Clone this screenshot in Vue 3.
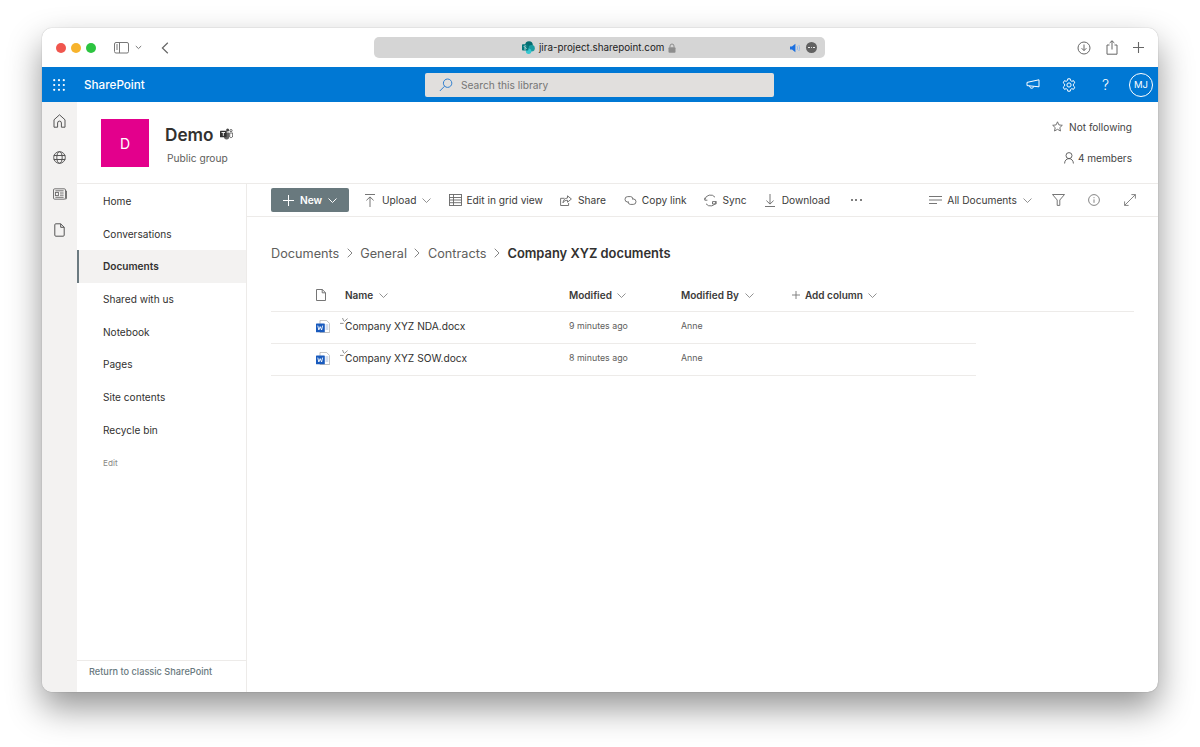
<script setup>
const navItems = [
  { label: 'Home' },
  { label: 'Conversations' },
  { label: 'Documents', active: true },
  { label: 'Shared with us' },
  { label: 'Notebook' },
  { label: 'Pages' },
  { label: 'Site contents' },
  { label: 'Recycle bin' },
]
const files = [
  { name: 'Company XYZ NDA.docx', modified: '9 minutes ago', by: 'Anne' },
  { name: 'Company XYZ SOW.docx', modified: '8 minutes ago', by: 'Anne' },
]
</script>

<template>
  <div class="page">
    <div class="window">
      <header class="titlebar">
        <div class="traffic">
          <span class="dot red"></span>
          <span class="dot yellow"></span>
          <span class="dot green"></span>
        </div>
        <svg class="tb-sidebar" width="16" height="12" viewBox="0 0 16 12" fill="none" stroke="#777" stroke-width="1">
          <rect x="0.5" y="0.5" width="14" height="10.5" rx="1.5" />
          <path d="M5.5 .5v10.5" />
          <path d="M2 3h2M2 5h2M2 7h2" />
        </svg>
        <svg class="tb-caret" width="7" height="5" viewBox="0 0 7 5" fill="none" stroke="#777" stroke-width="1"><path d="M.8 1l2.7 2.6L6.2 1" /></svg>
        <svg class="tb-back" width="8" height="12" viewBox="0 0 8 12" fill="none" stroke="#666" stroke-width="1.2"><path d="M6.8.8L1.4 6l5.4 5.2" /></svg>
        <div class="address">
          <svg class="sp-logo" width="13" height="13" viewBox="0 0 13 13">
            <circle cx="7" cy="4" r="3.8" fill="#036c70" />
            <circle cx="9.6" cy="7.2" r="3.2" fill="#1a9ba1" />
            <circle cx="6.6" cy="10.2" r="2.7" fill="#37c6d0" />
            <rect x="0" y="3.2" width="6.4" height="6.4" rx=".8" fill="#03787c" />
            <path d="M2 7.8c.8.4 2.3.4 2.3-.5 0-1-2.2-.6-2.2-1.7 0-.8 1.3-.9 2.1-.5" fill="none" stroke="#fff" stroke-width=".7" />
          </svg>
          <span class="host">jira-project.sharepoint.com</span>
          <svg class="lock" width="8" height="10" viewBox="0 0 8 10"><path d="M2 4.5V3a2 2 0 014 0v1.5" fill="none" stroke="#8d8d8d" stroke-width="1" /><rect x=".5" y="4.2" width="7" height="5.6" rx="1" fill="#8d8d8d" /></svg>
          <svg class="speaker" width="11" height="10" viewBox="0 0 11 10">
            <path d="M0 3.4h2L5.4.8v8.4L2 6.6H0z" fill="#1a6fe0" />
            <path d="M7 3c.7 1.2.7 2.8 0 4M8.8 2c1 1.8 1 4.2 0 6" fill="none" stroke="#8fb6ea" stroke-width=".9" />
          </svg>
          <span class="more-dot"><i></i><i></i><i></i></span>
        </div>
        <div class="tb-right">
          <svg width="14" height="14" viewBox="0 0 14 14" fill="none" stroke="#666" stroke-width="1"><circle cx="7" cy="7" r="6" /><path d="M7 3.5v6M4.6 7.2L7 9.6l2.4-2.4" /></svg>
          <svg width="12" height="15" viewBox="0 0 12 15" fill="none" stroke="#666" stroke-width="1"><path d="M3.5 5H1v9.2h10V5H8.5M6 9.5V.8M3.6 3L6 .8 8.4 3" /></svg>
          <svg width="11" height="11" viewBox="0 0 11 11" fill="none" stroke="#666" stroke-width="1.1"><path d="M5.5 0v11M0 5.5h11" /></svg>
        </div>
      </header>

      <div class="suitebar">
        <svg class="waffle" width="12" height="12" viewBox="0 0 12 12" fill="#fff">
          <circle cx="1.2" cy="1.2" r="1.1" /><circle cx="6" cy="1.2" r="1.1" /><circle cx="10.8" cy="1.2" r="1.1" />
          <circle cx="1.2" cy="6" r="1.1" /><circle cx="6" cy="6" r="1.1" /><circle cx="10.8" cy="6" r="1.1" />
          <circle cx="1.2" cy="10.8" r="1.1" /><circle cx="6" cy="10.8" r="1.1" /><circle cx="10.8" cy="10.8" r="1.1" />
        </svg>
        <span class="brand">SharePoint</span>
        <div class="search">
          <svg width="14" height="14" viewBox="0 0 14 14" fill="none" stroke="#2f7fd0" stroke-width="1"><circle cx="8.6" cy="5.2" r="4.2" /><path d="M5.6 8.2L.8 13" /></svg>
          <span>Search this library</span>
        </div>
        <div class="suite-right">
          <svg class="ic-mega" width="14" height="11" viewBox="0 0 14 11" fill="none" stroke="#fff" stroke-width="1"><path d="M13 .8v7L1 6.6V3.4zM3.6 6.9c0 3 3.9 3 3.9.7" /></svg>
          <svg class="ic-gear" width="14" height="14" viewBox="0 0 14 14" fill="none" stroke="#fff" stroke-width="1"><circle cx="7" cy="7" r="2.1" /><path d="M5.8.8h2.4l.4 1.8 1.2.7 1.8-.6 1.2 2.1-1.4 1.3v1.8l1.4 1.3-1.2 2.1-1.8-.6-1.2.7-.4 1.8H5.8l-.4-1.8-1.2-.7-1.8.6-1.2-2.1 1.4-1.3V6.1L1.2 4.8l1.2-2.1 1.8.6 1.2-.7z" /></svg>
          <span class="help">?</span>
          <span class="avatar">MJ</span>
        </div>
      </div>

      <div class="body">
        <aside class="rail">
          <svg width="13" height="14" viewBox="0 0 13 14" fill="none" stroke="#555" stroke-width="1"><path d="M1 5.8L6.5 .8 12 5.8v7.4H8.4V9a1.9 1.9 0 00-3.8 0v4.2H1z" /></svg>
          <svg width="13" height="13" viewBox="0 0 13 13" fill="none" stroke="#555" stroke-width="1"><circle cx="6.5" cy="6.5" r="5.8" /><ellipse cx="6.5" cy="6.5" rx="2.7" ry="5.8" /><path d="M.8 4.5h11.4M.8 8.5h11.4" /></svg>
          <svg width="14" height="12" viewBox="0 0 14 12" fill="none" stroke="#666" stroke-width=".9"><rect x=".5" y=".8" width="12" height="10.4" rx="1.2" /><path d="M12.5 3h1v7.2a1 1 0 01-1 1" /><rect x="2.4" y="4.4" width="3" height="3.2" /><path d="M2.4 2.8h8.2M7 5h3.6M7 7.2h3.6M2.4 9.3h8.2" /></svg>
          <svg width="11" height="14" viewBox="0 0 11 14" fill="none" stroke="#555" stroke-width="1"><path d="M.8 1.8a1 1 0 011-1h4.900l3.500 3.500v7.900a1 1 0 01-1 1H1.800a1 1 0 01-1-1zM6.700.8v3.500h3.500" /></svg>
        </aside>

        <div class="main">
          <section class="site-head">
            <div class="site-logo">D</div>
            <div class="site-info">
              <div class="site-title">
                <h1>Demo</h1>
                <svg width="13" height="12" viewBox="0 0 13 12">
                  <circle cx="7.6" cy="2" r="1.5" fill="#444" />
                  <circle cx="11" cy="2.6" r="1.1" fill="none" stroke="#444" stroke-width=".8" />
                  <path d="M9.7 5h3v3a1.7 1.7 0 01-3 1z" fill="none" stroke="#444" stroke-width=".8" />
                  <path d="M4 4.5h5.2v4.3a2.6 2.6 0 01-5.2 0z" fill="#666" />
                  <rect x="0" y="2.7" width="6.6" height="6.6" rx=".6" fill="#333" />
                  <path d="M1.5 4.5h3.600M3.300 4.500v3.400" stroke="#fff" stroke-width=".9" />
                </svg>
              </div>
              <div class="site-sub">Public group</div>
            </div>
            <div class="site-meta">
              <div class="meta-row follow">
                <svg width="11" height="11" viewBox="0 0 11 11" fill="none" stroke="#666" stroke-width=".9"><path d="M5.5 .8l1.400 3.100 3.400.4-2.500 2.300.7 3.400-3-1.700-3 1.700.7-3.400L.7 4.300l3.400-.4z" /></svg>
                <span>Not following</span>
              </div>
              <div class="meta-row">
                <svg width="10" height="12" viewBox="0 0 10 12" fill="none" stroke="#555" stroke-width=".9"><circle cx="5" cy="3.6" r="3" /><path d="M.6 11.5c0-2.600 1.700-4.900 4.400-4.900s4.400 2.300 4.400 4.900" /></svg>
                <span>4 members</span>
              </div>
            </div>
          </section>

          <div class="content-row">
            <nav class="leftnav">
              <ul>
                <li v-for="item in navItems" :key="item.label" :class="{ active: item.active }">{{ item.label }}</li>
              </ul>
              <div class="nav-edit">Edit</div>
              <div class="nav-foot">Return to classic SharePoint</div>
            </nav>

            <div class="library">
              <div class="cmdbar">
                <button class="btn-new">
                  <svg width="11" height="11" viewBox="0 0 11 11" stroke="#fff" stroke-width="1"><path d="M5.5 0v11M0 5.5h11" /></svg>
                  <span>New</span>
                  <svg width="9" height="5" viewBox="0 0 9 5" fill="none" stroke="#fff" stroke-width="1"><path d="M.5.5l4 4 4-4" /></svg>
                </button>
                <div class="cmd cmd-upload">
                  <svg width="10" height="13" viewBox="0 0 10 13" fill="none" stroke="#666" stroke-width=".9"><path d="M0 .5h10M5 13V3M1.4 6.4L5 2.900l3.600 3.500" /></svg>
                  <span>Upload</span>
                  <svg class="chev" width="9" height="5" viewBox="0 0 9 5" fill="none" stroke="#777" stroke-width=".8"><path d="M.5.5l4 4 4-4" /></svg>
                </div>
                <div class="cmd cmd-grid">
                  <svg width="13" height="12" viewBox="0 0 13 12" fill="none" stroke="#666" stroke-width=".9"><rect x=".5" y=".5" width="12" height="11" /><path d="M.5 3.5h12M.5 6h12M.5 8.7h12M4.5 .5v11" /></svg>
                  <span>Edit in grid view</span>
                </div>
                <div class="cmd cmd-share">
                  <svg width="12" height="11" viewBox="0 0 12 11" fill="none" stroke="#666" stroke-width=".9"><path d="M4.5 3.3H.6v7.200h8V8" /><path d="M7.5.8L11.4 4 7.5 7.200V5.300C5.400 5.200 4 6 3 7.800c.2-2.900 1.800-4.500 4.500-4.800z" /></svg>
                  <span>Share</span>
                </div>
                <div class="cmd cmd-link">
                  <svg width="13" height="9" viewBox="0 0 13 9" fill="none" stroke="#666" stroke-width=".9"><path d="M5 6H3.700a2.700 2.700 0 010-5.400h3A2.700 2.700 0 019 3" /><path d="M8 3h1.300a2.700 2.700 0 010 5.400h-3A2.700 2.700 0 014 6" /></svg>
                  <span>Copy link</span>
                </div>
                <div class="cmd cmd-sync">
                  <svg width="13" height="13" viewBox="0 0 13 13" fill="none" stroke="#666" stroke-width=".9"><path d="M.8 5.500A5.800 5.800 0 0111 3.200M12.200 7.500A5.800 5.800 0 012 9.800" /><path d="M8.500 10h3.600V7.600H8.500zM.8 3.800v2.400h2.600" /></svg>
                  <span>Sync</span>
                </div>
                <div class="cmd cmd-down">
                  <svg width="10" height="13" viewBox="0 0 10 13" fill="none" stroke="#666" stroke-width=".9"><path d="M0 12.500h10M5 0v10M1.400 6.600L5 10.100l3.600-3.500" /></svg>
                  <span>Download</span>
                </div>
                <span class="cmd-more"><i></i><i></i><i></i></span>
                <div class="cmd-side">
                  <div class="cmd cmd-view">
                    <svg width="13" height="8" viewBox="0 0 13 8" fill="none" stroke="#666" stroke-width=".9"><path d="M0 .5h13M0 4h13M0 7.500h8" /></svg>
                    <span>All Documents</span>
                    <svg class="chev" width="9" height="5" viewBox="0 0 9 5" fill="none" stroke="#777" stroke-width=".8"><path d="M.5.5l4 4 4-4" /></svg>
                  </div>
                  <svg class="side-filter" width="13" height="12" viewBox="0 0 13 12" fill="none" stroke="#666" stroke-width=".9"><path d="M.5.5h12L7.800 6v5.400H5.200V6z" /></svg>
                  <svg class="side-info" width="12" height="12" viewBox="0 0 12 12" fill="none" stroke="#777" stroke-width=".9"><circle cx="6" cy="6" r="5.400" /><path d="M6 5.400v3.400M6 3.200v1" /></svg>
                  <svg class="side-expand" width="12" height="12" viewBox="0 0 12 12" fill="none" stroke="#777" stroke-width=".9"><path d="M.6 11.400L11.400 .6M7.400 .6h4v4M.6 7.400v4h4" /></svg>
                </div>
              </div>

              <div class="crumbs">
                <span>Documents</span>
                <svg width="6" height="10" viewBox="0 0 6 10" fill="none" stroke="#777" stroke-width=".9"><path d="M.7.7L5 5 .7 9.3" /></svg>
                <span>General</span>
                <svg width="6" height="10" viewBox="0 0 6 10" fill="none" stroke="#777" stroke-width=".9"><path d="M.7.7L5 5 .7 9.3" /></svg>
                <span>Contracts</span>
                <svg width="6" height="10" viewBox="0 0 6 10" fill="none" stroke="#777" stroke-width=".9"><path d="M.7.7L5 5 .7 9.3" /></svg>
                <strong>Company XYZ documents</strong>
              </div>

              <div class="list">
                <div class="list-head">
                  <div class="col-icon">
                    <svg width="10" height="12" viewBox="0 0 10 12" fill="none" stroke="#666" stroke-width=".9"><path d="M.5.5h5.800l3.200 3.200v7.800H.5zM6.200.5v3.300h3.300" /></svg>
                  </div>
                  <div class="col-name">Name <svg width="9" height="5" viewBox="0 0 9 5" fill="none" stroke="#777" stroke-width=".8"><path d="M.5.5l4 4 4-4" /></svg></div>
                  <div class="col-mod">Modified <svg width="9" height="5" viewBox="0 0 9 5" fill="none" stroke="#777" stroke-width=".8"><path d="M.5.5l4 4 4-4" /></svg></div>
                  <div class="col-by">Modified By <svg width="9" height="5" viewBox="0 0 9 5" fill="none" stroke="#777" stroke-width=".8"><path d="M.5.5l4 4 4-4" /></svg></div>
                  <div class="col-add">
                    <svg width="8" height="8" viewBox="0 0 8 8" stroke="#777" stroke-width=".9"><path d="M4 0v8M0 4h8" /></svg>
                    Add column
                    <svg width="9" height="5" viewBox="0 0 9 5" fill="none" stroke="#777" stroke-width=".8"><path d="M.5.5l4 4 4-4" /></svg>
                  </div>
                </div>
                <div v-for="file in files" :key="file.name" class="list-row">
                  <div class="col-icon">
                    <svg width="14" height="13" viewBox="0 0 14 13">
                      <path d="M4 .4h6.500L13.600 3.500v9H4z" fill="#fff" stroke="#a6a6a6" stroke-width=".7" />
                      <path d="M9.500 5h2.800M9.500 7h2.800M9.500 9h2.800" stroke="#8fa9d4" stroke-width=".8" />
                      <rect x="0" y="3.500" width="8.800" height="8.800" rx=".6" fill="#185abd" />
                      <path d="M1.800 5.600l1 4.400 1.400-3.400 1.400 3.400 1-4.400" fill="none" stroke="#fff" stroke-width=".9" />
                    </svg>
                  </div>
                  <div class="col-name file-name">
                    <svg class="new-mark" width="8" height="7" viewBox="0 0 8 7" fill="none" stroke="#777" stroke-width=".8"><path d="M2.500 0l1.300 3M7.600 .6L4.200 3.600M0 5.400h3.600" /></svg>
                    {{ file.name }}
                  </div>
                  <div class="col-mod cell">{{ file.modified }}</div>
                  <div class="col-by cell">{{ file.by }}</div>
                </div>
              </div>
            </div>
          </div>
        </div>
      </div>
    </div>
  </div>
</template>

<style scoped>
.page {
  width: 1200px;
  height: 747px;
  padding: 28px 42px 55px;
  box-sizing: border-box;
  background: #fff;
  font-family: Inter, "Liberation Sans", sans-serif;
  color: #323130;
}
.window {
  height: 664px;
  display: flex;
  flex-direction: column;
  border-radius: 10px;
  overflow: hidden;
  background: #fff;
  box-shadow: 0 0 1px rgba(0, 0, 0, 0.45), 0 16px 34px rgba(0, 0, 0, 0.42);
}

/* browser chrome */
.titlebar {
  height: 39px;
  flex: none;
  display: flex;
  align-items: center;
  background: #fff;
}
.traffic {
  display: flex;
  gap: 5px;
  margin-left: 14px;
}
.dot {
  width: 10px;
  height: 10px;
  border-radius: 50%;
}
.red { background: #f0564e; }
.yellow { background: #f7b32c; }
.green { background: #2cc440; }
.tb-sidebar { margin-left: 18px; }
.tb-caret { margin-left: 5px; }
.tb-back { margin-left: 19px; margin-right: 205px; }
.address {
  width: 451px;
  height: 21px;
  border-radius: 5px;
  background: #d5d5d5;
  display: flex;
  align-items: center;
  font-size: 9.8px;
  color: #222;
}
.sp-logo { margin-left: 148px; }
.host { margin-left: 4px; white-space: nowrap; }
.lock { margin-left: 4px; }
.speaker { margin-left: auto; }
.more-dot {
  width: 11px;
  height: 11px;
  margin: 0 8px 0 5px;
  border-radius: 50%;
  background: #616161;
  display: flex;
  align-items: center;
  justify-content: center;
  gap: 1px;
}
.more-dot i {
  width: 1.5px;
  height: 1.5px;
  border-radius: 50%;
  background: #fff;
}
.tb-right {
  margin-left: auto;
  margin-right: 14px;
  display: flex;
  align-items: center;
  gap: 15px;
}

/* suite bar */
.suitebar {
  height: 35px;
  flex: none;
  display: flex;
  align-items: center;
  background: #0078d4;
  color: #fff;
}
.waffle { margin-left: 11px; }
.brand {
  margin-left: 19px;
  width: 341px;
  font-size: 11.7px;
  font-weight: 500;
  line-height: 14px;
  padding-top: 1px;
}
.search {
  width: 349px;
  height: 24px;
  box-sizing: border-box;
  padding-left: 14px;
  border-radius: 2px;
  background: #e1dfdd;
  color: #757575;
  font-size: 10.2px;
  display: flex;
  align-items: center;
  gap: 8px;
}
.search span { padding-top: 1px; }
.suite-right {
  margin-left: auto;
  display: flex;
  align-items: center;
  margin-right: 5px;
}
.ic-mega { margin-right: 22px; }
.ic-gear { margin-right: 26px; }
.help {
  font-size: 14px;
  font-weight: 300;
  margin-right: 20px;
}
.avatar {
  width: 24px;
  height: 24px;
  box-sizing: border-box;
  border: 1px solid #fff;
  border-radius: 50%;
  font-size: 9.5px;
  display: flex;
  align-items: center;
  justify-content: center;
}

/* layout */
.body {
  flex: 1;
  min-height: 0;
  display: flex;
}
.rail {
  width: 35px;
  flex: none;
  background: #f3f2f1;
  display: flex;
  flex-direction: column;
  align-items: center;
  padding-top: 12px;
  box-sizing: border-box;
  gap: 23.3px;
}
.main {
  flex: 1;
  min-width: 0;
  display: flex;
  flex-direction: column;
}
.site-head {
  height: 82px;
  flex: none;
  box-sizing: border-box;
  display: flex;
  padding: 17px 26px 0 24px;
  border-bottom: 1px solid #edebe9;
}
.site-logo {
  width: 48px;
  height: 48px;
  background: #e3008c;
  color: #fff;
  font-size: 14px;
  display: flex;
  align-items: center;
  justify-content: center;
}
.site-info { margin-left: 16px; }
.site-title {
  display: flex;
  align-items: center;
  gap: 6px;
  height: 22px;
  margin-top: 4px;
}
h1 {
  margin: 0;
  font-size: 17.2px;
  font-weight: 600;
  color: #323130;
}
.site-sub {
  margin: 7px 0 0 2px;
  font-size: 10.2px;
  color: #605e5c;
}
.site-meta {
  margin-left: auto;
  display: flex;
  flex-direction: column;
  align-items: flex-end;
  gap: 16px;
  font-size: 10.1px;
  color: #444;
}
.meta-row {
  display: flex;
  align-items: center;
  gap: 4px;
  height: 15px;
}
.follow { gap: 6px; }
.content-row {
  flex: 1;
  min-height: 0;
  display: flex;
}

/* left nav */
.leftnav {
  width: 170px;
  flex: none;
  box-sizing: border-box;
  padding-top: 1px;
  border-right: 1px solid #edebe9;
  display: flex;
  flex-direction: column;
}
.leftnav ul {
  list-style: none;
  margin: 0;
  padding: 0;
}
.leftnav li {
  height: 32.7px;
  line-height: 32.5px;
  padding-left: 26px;
  font-size: 10.1px;
  color: #323130;
}
.leftnav li.active {
  background: #f3f2f1;
  border-left: 2px solid #6b7a80;
  padding-left: 24px;
  font-weight: 600;
}
.nav-edit {
  padding-left: 26px;
  margin-top: 11px;
  font-size: 8.2px;
  color: #8a8886;
}
.nav-foot {
  margin-top: auto;
  height: 32px;
  box-sizing: border-box;
  border-top: 1px solid #edebe9;
  padding: 5px 0 0 12px;
  font-size: 9.2px;
  font-weight: 500;
  color: #69797e;
}

/* command bar */
.library {
  flex: 1;
  min-width: 0;
  padding-left: 24px;
}
.cmdbar {
  height: 33px;
  box-sizing: border-box;
  margin-left: -24px;
  padding-left: 24px;
  border-bottom: 1px solid #edebe9;
  display: flex;
  align-items: center;
  font-size: 10.2px;
  color: #3b3a39;
}
.btn-new {
  width: 78px;
  height: 24px;
  border: 0;
  border-radius: 2px;
  background: #69797e;
  color: #fff;
  font: 600 10.2px Inter, "Liberation Sans", sans-serif;
  display: flex;
  align-items: center;
  justify-content: center;
  gap: 6px;
  padding: 0;
}
.cmd {
  display: flex;
  align-items: center;
  gap: 6px;
}
.cmd-upload { margin-left: 16px; gap: 7px; }
.cmd-upload .chev { margin-left: -1px; }
.cmd-grid { margin-left: 18px; gap: 4px; }
.cmd-share { margin-left: 17px; }
.cmd-link { margin-left: 18px; gap: 5px; }
.cmd-sync { margin-left: 17px; }
.cmd-down { margin-left: 18px; gap: 7px; }
.cmd-more {
  margin-left: 21px;
  display: flex;
  gap: 2.5px;
}
.cmd-more i {
  width: 2px;
  height: 2px;
  border-radius: 50%;
  background: #555;
}
.cmd-side {
  margin-left: auto;
  margin-right: 22px;
  display: flex;
  align-items: center;
}
.cmd-view { gap: 5px; }
.cmd-view .chev { margin-left: 1px; }
.side-filter { margin-left: 20px; }
.side-info { margin-left: 23px; }
.side-expand { margin-left: 24px; }

/* breadcrumb */
.crumbs {
  margin-top: 27px;
  height: 18px;
  display: flex;
  align-items: center;
  gap: 7.5px;
  font-size: 12.7px;
  color: #605e5c;
}
.crumbs strong {
  font-size: 12.9px;
  font-weight: 600;
  color: #323130;
}

/* file list */
.list { margin-top: 17px; }
.list-head,
.list-row {
  display: flex;
  align-items: center;
}
.list-head {
  height: 32px;
  margin-right: 24px;
  border-bottom: 1px solid #edebe9;
  font-size: 10px;
  font-weight: 600;
  color: #3b3a39;
}
.list-row {
  width: 705px;
  height: 32px;
  box-sizing: border-box;
  padding-bottom: 3px;
  border-bottom: 1px solid #edebe9;
}
.col-icon {
  width: 74px;
  flex: none;
  padding-left: 45px;
  box-sizing: border-box;
  display: flex;
}
.col-name {
  width: 224px;
  flex: none;
  display: flex;
  align-items: center;
  gap: 6px;
}
.col-mod {
  width: 112px;
  flex: none;
  display: flex;
  align-items: center;
  gap: 5px;
}
.col-by {
  width: 111px;
  flex: none;
  display: flex;
  align-items: center;
  gap: 6px;
}
.col-add {
  display: flex;
  align-items: center;
  gap: 5px;
}
.file-name {
  position: relative;
  font-size: 10.2px;
  color: #323130;
}
.new-mark {
  position: absolute;
  left: -5px;
  top: -2px;
}
.cell {
  font-size: 8.8px;
  color: #605e5c;
  padding-bottom: 2px;
}
</style>

<style>
html, body {
  margin: 0;
  background: #fff;
}
</style>
